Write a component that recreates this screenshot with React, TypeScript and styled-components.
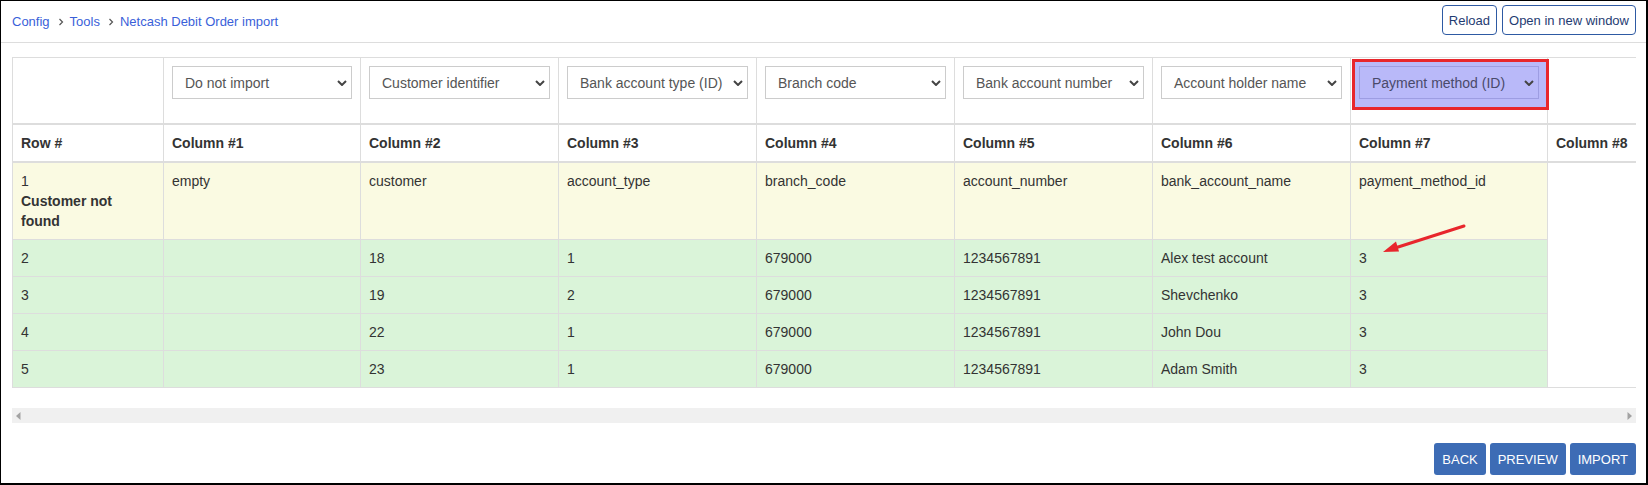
import React from "react";
import styled, { createGlobalStyle } from "styled-components";

const GlobalStyle = createGlobalStyle`
  html, body { margin: 0; padding: 0; background: #fff; }
  body { font-family: "Liberation Sans", Arial, sans-serif; color: #333; }
  * { box-sizing: border-box; }
`;

const Frame = styled.div`
  position: relative;
  width: 1648px;
  height: 485px;
  border: 1px solid #000;
  border-right-width: 2px;
  border-bottom-width: 2px;
  background: #fff;
  overflow: hidden;
`;

const TopBar = styled.div`
  display: flex;
  justify-content: space-between;
  align-items: flex-start;
  height: 42px;
  padding: 4px 10px 0 11px;
  border-bottom: 1px solid #ddd;
`;

const Crumbs = styled.nav`
  display: flex;
  align-items: center;
  margin-top: 8px;
  font-size: 13px;
  line-height: 18px;
`;

const Crumb = styled.a`
  color: #3a5fd9;
  text-decoration: none;
`;

const Sep = styled.svg`
  width: 6px;
  height: 8px;
  margin: 0 6px 0 8px;
`;

const TopActions = styled.div`
  display: flex;
  gap: 5px;
`;

const OutlineButton = styled.button`
  height: 30px;
  padding: 0 6px;
  border: 1px solid #2e5aa3;
  border-radius: 4px;
  background: #fff;
  color: #1f3c72;
  font-family: inherit;
  font-size: 13px;
`;

const Content = styled.div`
  padding: 14px 10px 0 11px;
`;

const TableWrap = styled.div`
  width: 1624px;
  overflow: hidden;
`;

const Table = styled.table`
  width: 1624px;
  table-layout: fixed;
  border-collapse: collapse;
  border: 1px solid #ddd;
  font-size: 14px;
  line-height: 20px;
`;

const Cell = styled.td<{ $tone?: "warn" | "ok" }>`
  border: 1px solid #ddd;
  padding: 8px;
  vertical-align: top;
  background: ${(p) =>
    p.$tone === "warn" ? "#fafae2" : p.$tone === "ok" ? "#daf4d9" : "transparent"};
  color: #333;
`;

const SelectCell = styled.td`
  border: 1px solid #ddd;
  border-bottom-width: 2px;
  padding: 8px 8px 24px;
  vertical-align: top;
`;

const HeadCell = styled.th`
  border: 1px solid #ddd;
  border-bottom-width: 2px;
  padding: 8px;
  text-align: left;
  font-weight: bold;
  color: #333;
  white-space: nowrap;
  overflow: hidden;
`;

const SelectHolder = styled.div`
  position: relative;
`;

const Highlight = styled.div`
  position: absolute;
  left: -7px;
  top: -7px;
  width: 197px;
  height: 51px;
  border: 3px solid #e8262c;
  background: #b9b9f9;
`;

const SelectBox = styled.div<{ $hl?: boolean }>`
  position: relative;
  z-index: 1;
  display: flex;
  align-items: center;
  justify-content: space-between;
  height: 33px;
  padding: 0 4px 0 12px;
  border: 1px solid ${(p) => (p.$hl ? "#9d9de2" : "#ccc")};
  background: ${(p) => (p.$hl ? "transparent" : "#fff")};
  color: ${(p) => (p.$hl ? "#4a4a6a" : "#555")};
  font-size: 14px;
  white-space: nowrap;
`;

const Chevron = styled.svg`
  flex: none;
  width: 10px;
  height: 6px;
`;

const Bold = styled.div`
  max-width: 112px;
  font-weight: bold;
`;

const Scrollbar = styled.div`
  display: flex;
  align-items: center;
  justify-content: space-between;
  height: 15px;
  margin-top: 20px;
  padding: 0 4px;
  background: #f0f0f0;
`;

const Footer = styled.div`
  display: flex;
  justify-content: flex-end;
  gap: 4px;
  margin-top: 20px;
`;

const PrimaryButton = styled.button`
  height: 32px;
  padding: 0 8px;
  border: none;
  border-radius: 3px;
  background: #3d6cb5;
  color: #fff;
  font-family: inherit;
  font-size: 13px;
  text-transform: uppercase;
`;

const ArrowMark = styled.svg`
  position: absolute;
  left: 1375px;
  top: 214px;
  width: 95px;
  height: 45px;
  pointer-events: none;
`;

const Select = ({ label, hl }: { label: string; hl?: boolean }) => (
  <SelectHolder>
    {hl && <Highlight />}
    <SelectBox $hl={hl}>
      <span>{label}</span>
      <Chevron viewBox="0 0 10 6">
        <path d="M1 1 L5 5 L9 1" fill="none" stroke="#444" strokeWidth="2" />
      </Chevron>
    </SelectBox>
  </SelectHolder>
);

const selects = [
  "Do not import",
  "Customer identifier",
  "Bank account type (ID)",
  "Branch code",
  "Bank account number",
  "Account holder name",
  "Payment method (ID)",
];

const colWidths = [151, 197, 198, 198, 198, 198, 198, 197, 89];

const rows = [
  ["2", "", "18", "1", "679000", "1234567891", "Alex test account", "3"],
  ["3", "", "19", "2", "679000", "1234567891", "Shevchenko", "3"],
  ["4", "", "22", "1", "679000", "1234567891", "John Dou", "3"],
  ["5", "", "23", "1", "679000", "1234567891", "Adam Smith", "3"],
];

const firstRow = ["empty", "customer", "account_type", "branch_code", "account_number", "bank_account_name", "payment_method_id"];

export default function App() {
  return (
    <>
      <GlobalStyle />
      <Frame>
        <TopBar>
          <Crumbs>
            <Crumb>Config</Crumb>
            <Sep viewBox="0 0 6 8">
              <path d="M1.5 1 L4.5 4 L1.5 7" fill="none" stroke="#555" strokeWidth="1.2" />
            </Sep>
            <Crumb>Tools</Crumb>
            <Sep viewBox="0 0 6 8">
              <path d="M1.5 1 L4.5 4 L1.5 7" fill="none" stroke="#555" strokeWidth="1.2" />
            </Sep>
            <Crumb>Netcash Debit Order import</Crumb>
          </Crumbs>
          <TopActions>
            <OutlineButton>Reload</OutlineButton>
            <OutlineButton>Open in new window</OutlineButton>
          </TopActions>
        </TopBar>
        <Content>
          <TableWrap>
            <Table>
              <colgroup>
                {colWidths.map((w, i) => (
                  <col key={i} style={{ width: w }} />
                ))}
              </colgroup>
              <thead>
                <tr>
                  <SelectCell />
                  {selects.map((s, i) => (
                    <SelectCell key={s}>
                      <Select label={s} hl={i === 6} />
                    </SelectCell>
                  ))}
                  <SelectCell />
                </tr>
                <tr>
                  <HeadCell>Row #</HeadCell>
                  {Array.from({ length: 8 }, (_, i) => (
                    <HeadCell key={i}>Column #{i + 1}</HeadCell>
                  ))}
                </tr>
              </thead>
              <tbody>
                <tr>
                  <Cell $tone="warn">
                    1
                    <Bold>Customer not found</Bold>
                  </Cell>
                  {firstRow.map((v) => (
                    <Cell key={v} $tone="warn">
                      {v}
                    </Cell>
                  ))}
                </tr>
                {rows.map((r) => (
                  <tr key={r[0]}>
                    {r.map((v, i) => (
                      <Cell key={i} $tone="ok">
                        {v}
                      </Cell>
                    ))}
                  </tr>
                ))}
              </tbody>
            </Table>
          </TableWrap>
          <Scrollbar>
            <svg width="5" height="8" viewBox="0 0 5 8">
              <path d="M4.5 0 L0 4 L4.5 8 Z" fill="#a3a3a3" />
            </svg>
            <svg width="5" height="8" viewBox="0 0 5 8">
              <path d="M0.5 0 L5 4 L0.5 8 Z" fill="#a3a3a3" />
            </svg>
          </Scrollbar>
          <Footer>
            <PrimaryButton>Back</PrimaryButton>
            <PrimaryButton>Preview</PrimaryButton>
            <PrimaryButton>Import</PrimaryButton>
          </Footer>
        </Content>
        <ArrowMark viewBox="0 0 95 45">
          <line x1="88" y1="11" x2="19" y2="33" stroke="#e8262c" strokeWidth="3" strokeLinecap="round" />
          <path d="M7 37 L20 26.5 L23 36.5 Z" fill="#e8262c" />
        </ArrowMark>
      </Frame>
    </>
  );
}
